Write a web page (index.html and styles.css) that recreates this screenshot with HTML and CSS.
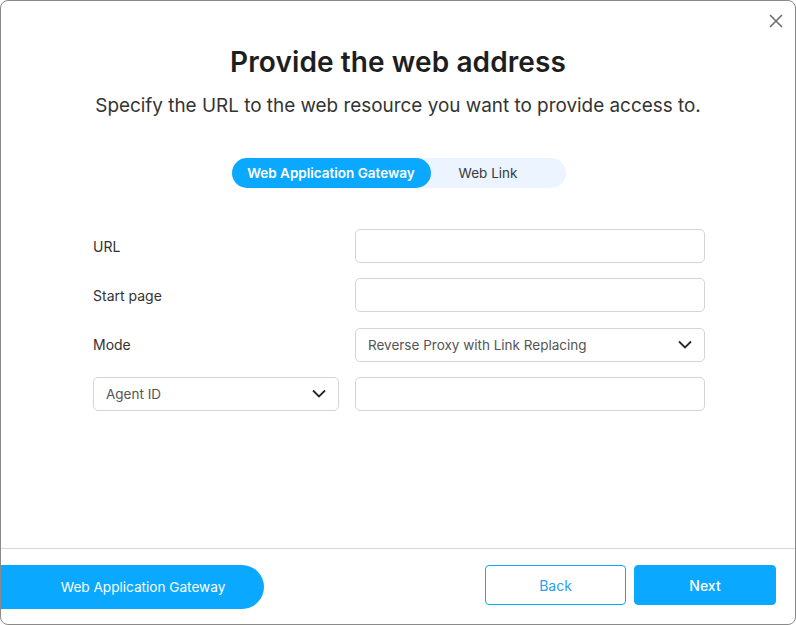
FILE: index.html
```html
<!DOCTYPE html>
<html>
<head>
<meta charset="utf-8">
<link rel="stylesheet" href="styles.css">
</head>
<body>
<div class="window">
  <button class="close" aria-label="Close">
    <svg width="14" height="14" viewBox="0 0 14 14"><path d="M1 1L13 13M13 1L1 13" stroke="#6b6f73" stroke-width="1.6" fill="none"/></svg>
  </button>
  <div class="content">
    <h1 class="title">Provide the web address</h1>
    <p class="subtitle">Specify the URL to the web resource you want to provide access to.</p>
    <div class="toggle-wrap">
      <div class="toggle">
        <span class="seg active">Web Application Gateway</span>
        <span class="seg">Web Link</span>
      </div>
    </div>
    <div class="form">
      <label class="label">URL</label>
      <div class="input"></div>
      <label class="label">Start page</label>
      <div class="input"></div>
      <label class="label">Mode</label>
      <div class="input select"><span>Reverse Proxy with Link Replacing</span>
        <svg class="chev" width="14" height="9" viewBox="0 0 14 9"><path d="M1 1.5L7 7.5L13 1.5" stroke="#1f2a33" stroke-width="1.8" fill="none"/></svg>
      </div>
      <div class="input select"><span>Agent ID</span>
        <svg class="chev" width="14" height="9" viewBox="0 0 14 9"><path d="M1 1.5L7 7.5L13 1.5" stroke="#1f2a33" stroke-width="1.8" fill="none"/></svg>
      </div>
      <div class="input"></div>
    </div>
  </div>
  <div class="footer">
    <button class="pill">Web Application Gateway</button>
    <div class="actions">
      <button class="btn back">Back</button>
      <button class="btn next">Next</button>
    </div>
  </div>
</div>
</body>
</html>
```

FILE: styles.css
```css
* { box-sizing: border-box; }
html, body { margin: 0; padding: 0; background: #ffffff; }
body { font-family: Inter, "Noto Sans", sans-serif; color: #222; }
.window {
  position: relative;
  width: 796px;
  height: 625px;
  border: 1px solid #8a8a8a;
  border-radius: 8px;
  display: flex;
  flex-direction: column;
  overflow: hidden;
  background: #fff;
}
.close {
  position: absolute;
  top: 12px;
  right: 11px;
  width: 16px;
  height: 16px;
  padding: 0;
  border: 0;
  background: none;
  display: flex;
  align-items: center;
  justify-content: center;
}
.content { flex: 1; padding-top: 43px; }
.title {
  margin: 0;
  text-align: center;
  font-size: 28px;
  line-height: 36px;
  font-weight: 600;
  color: #1e1e1e;
  letter-spacing: 0.1px;
}
.subtitle {
  margin: 13px 0 0;
  text-align: center;
  font-size: 18.9px;
  line-height: 26px;
  color: #333;
}
.toggle-wrap { display: flex; justify-content: center; margin-top: 39px; }
.toggle {
  display: flex;
  width: 334px;
  height: 30px;
  background: #ebf4ff;
  border-radius: 15px;
  margin-left: 1px;
}
.seg {
  display: flex;
  align-items: center;
  justify-content: center;
  font-size: 13.5px;
  color: #3a3a3a;
  border-radius: 15px;
  flex: 1;
  padding-right: 20px;
}
.seg.active {
  flex: 0 0 199px;
  padding-right: 0;
  background: #0aa8ff;
  color: #fff;
  font-weight: 600;
}
.form {
  display: grid;
  grid-template-columns: 246px 350px;
  column-gap: 16px;
  row-gap: 15.3px;
  grid-auto-rows: 34px;
  margin-top: 41px;
  padding-left: 92px;
}
.label {
  display: flex;
  align-items: center;
  font-size: 14px;
  color: #333;
}
.input {
  border: 1px solid #d2d5d8;
  border-radius: 5px;
  background: #fff;
}
.select {
  display: flex;
  align-items: center;
  justify-content: space-between;
  padding: 0 12px 0 12px;
  font-size: 13.5px;
  color: #555;
}
.chev { display: block; }
.footer {
  height: 76px;
  border-top: 1px solid #d6d6d6;
  display: flex;
  align-items: flex-start;
  justify-content: space-between;
  padding-top: 16px;
}
.pill {
  width: 264px;
  height: 44px;
  margin-left: -1px;
  border: 0;
  background: #0aa8ff;
  color: #fff;
  font-family: inherit;
  font-size: 13.6px;
  border-radius: 0 22px 22px 0;
  padding: 0 0 0 22px;
}
.actions { display: flex; gap: 8px; padding-right: 19px; }
.btn {
  width: 142px;
  height: 40px;
  border-radius: 4px;
  font-family: inherit;
  font-size: 14px;
}
.back { width: 141px; background: #fff; border: 1px solid #0aa8ff; color: #2aa0f0; }
.next { background: #0aa8ff; border: 1px solid #0aa8ff; color: #fff; font-weight: 500; }
```
